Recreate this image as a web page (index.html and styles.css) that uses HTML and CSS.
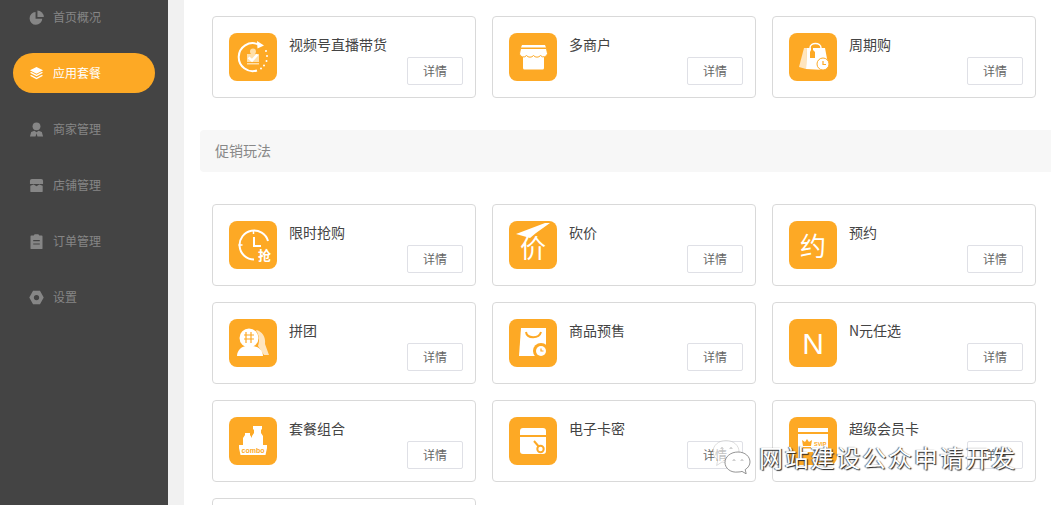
FILE: index.html
```html
<!DOCTYPE html>
<html lang="zh-CN">
<head>
<meta charset="utf-8">
<title>应用套餐</title>
<link rel="stylesheet" href="styles.css">
</head>
<body>
<div class="app">
  <nav class="sidebar">
    <a class="nav-item"><svg class="nav-icon" viewBox="0 0 16 16"><path d="M7 2.200A6.800 6.800 0 1 0 14.200 9.400H7z"/><path d="M9 .6v6.800h6.800A7 7 0 0 0 9 .6z"/></svg><span class="nav-label">首页概况</span></a>
    <a class="nav-item active"><svg class="nav-icon" viewBox="0 0 16 16"><path d="M8 1 15 4.600 8 8.200 1 4.600z"/><path d="M1 7.200 2.600 6.400 8 9.200l5.400-2.800 1.600.8L8 10.800z"/><path d="M1 10.400 2.600 9.600 8 12.400l5.400-2.800 1.600.8L8 14z"/></svg><span class="nav-label">应用套餐</span></a>
    <a class="nav-item"><svg class="nav-icon" viewBox="0 0 16 16"><circle cx="8" cy="4.600" r="4.200"/><path d="M1 15.500l1.300-4.900 3.400-1.400L8 11l2.300-1.800 3.400 1.400 1.300 4.900H9l-1-3.500-1 3.500z"/></svg><span class="nav-label">商家管理</span></a>
    <a class="nav-item"><svg class="nav-icon" viewBox="0 0 16 16"><path d="M3 1h10a2 2 0 0 1 2 2v3.500H1V3a2 2 0 0 1 2-2z"/><path d="M1.400 8.200 5 7l3 1.800L11 7l3.600 1.200v5.800a1 1 0 0 1-1 1H2.400a1 1 0 0 1-1-1z"/></svg><span class="nav-label">店铺管理</span></a>
    <a class="nav-item"><svg class="nav-icon" viewBox="0 0 16 16"><path fill-rule="evenodd" d="M5 1.500 6 .3h4l1 1.200h2.600a.8.8 0 0 1 .8.8v13a.8.8 0 0 1-.8.8H2.400a.8.8 0 0 1-.8-.8v-13a.8.8 0 0 1 .8-.8zM4.500 6.500v1.300h7V6.500zM4.500 10v1.300h7V10z"/></svg><span class="nav-label">订单管理</span></a>
    <a class="nav-item"><svg class="nav-icon" viewBox="0 0 16 16"><path fill-rule="evenodd" d="M4.300.8h7.400L15.700 8l-4 7.200H4.300L.3 8zM8 5.200a2.800 2.800 0 1 0 0 5.600 2.800 2.800 0 0 0 0-5.600z"/></svg><span class="nav-label">设置</span></a>
  </nav>
  <div class="gutter"></div>
  <main class="content">
    <section class="grid">
      <article class="card">
        <svg class="app-icon" viewBox="0 0 48 48"><rect width="48" height="48" rx="8" class="tile"/><circle cx="24" cy="18.500" r="3" class="pale"/><path d="M29 11.200A14 14 0 1 0 28 37.500" class="stroke"/><path d="M28 8l7 4.500-6.500 3z" class="solid"/><path d="M37 18v.1M38 23v.1M37.500 28v.1M35 32.500v.1M32 35.500v.1" class="dots"/><rect x="18" y="21" width="12" height="8" class="pale"/><rect x="18" y="30" width="12" height="1.500" class="pale"/><path d="M19.500 24.500l3.500 3 5.500-6" class="check"/></svg>
        <h3 class="card-title">视频号直播带货</h3>
        <button class="detail">详情</button>
      </article>
      <article class="card">
        <svg class="app-icon" viewBox="0 0 48 48"><rect width="48" height="48" rx="8" class="tile"/><path d="M14 22h21v13a1.500 1.500 0 0 1-1.500 1.500h-18A1.500 1.500 0 0 1 14 35z" class="solid"/><path d="M13 12h23l1 2.500H12z" class="solid"/><path d="M11.500 15.500h26l1 5a4 4 0 0 1-7 2 4.500 4.500 0 0 1-7 0 4.500 4.500 0 0 1-7 0 4 4 0 0 1-7-1.500z" class="solid edge"/></svg>
        <h3 class="card-title">多商户</h3>
        <button class="detail">详情</button>
      </article>
      <article class="card">
        <svg class="app-icon" viewBox="0 0 48 48"><rect width="48" height="48" rx="8" class="tile"/><path d="M15 15h3l-1 21-7-2z" class="pale-solid"/><path d="M18 15h18l3 16-4 6-18-1z" class="solid"/><path d="M21 15c0-6 11-6 11 0" class="stroke thin"/><path d="M22 14h2v3l2 2v6h-5v-6l1-2z" class="tile"/><circle cx="34" cy="31" r="6" class="solid edge"/><path d="M34 28v3.500h3" class="cut thin"/></svg>
        <h3 class="card-title">周期购</h3>
        <button class="detail">详情</button>
      </article>
    </section>

    <h2 class="section-head">促销玩法</h2>

    <section class="grid">
      <article class="card">
        <svg class="app-icon" viewBox="0 0 48 48"><rect width="48" height="48" rx="8" class="tile"/><path d="M25 38.500A14.500 14.500 0 1 1 39 20" class="stroke"/><path d="M24.500 9v4M9.500 24h4" class="stroke thin"/><path d="M25 16v9h7" class="stroke"/><text x="29" y="39" class="tile-glyph small">抢</text></svg>
        <h3 class="card-title">限时抢购</h3>
        <button class="detail">详情</button>
      </article>
      <article class="card">
        <svg class="app-icon" viewBox="0 0 48 48"><rect width="48" height="48" rx="8" class="tile"/><path d="M7 13 36 2l5 0-14 10-6 5z" class="solid"/><text x="11" y="37" class="tile-glyph large">价</text></svg>
        <h3 class="card-title">砍价</h3>
        <button class="detail">详情</button>
      </article>
      <article class="card">
        <svg class="app-icon" viewBox="0 0 48 48"><rect width="48" height="48" rx="8" class="tile"/><text x="11" y="35" class="tile-glyph large">约</text></svg>
        <h3 class="card-title">预约</h3>
        <button class="detail">详情</button>
      </article>
      <article class="card">
        <svg class="app-icon" viewBox="0 0 48 48"><rect width="48" height="48" rx="8" class="tile"/><path d="M27 11c6 1 10 7 9 14l4 11h-5l-6-9c2-6 1-11-2-16z" class="pale-solid"/><circle cx="20" cy="19" r="9.500" class="solid"/><path d="M8 37c0-6 5-10 10-10h5c6 0 11 4 11 10z" class="solid"/><path d="M15 20h10M15 16h10M17 13v11M22 13v11" class="cut thin"/></svg>
        <h3 class="card-title">拼团</h3>
        <button class="detail">详情</button>
      </article>
      <article class="card">
        <svg class="app-icon" viewBox="0 0 48 48"><rect width="48" height="48" rx="8" class="tile"/><path d="M12 9h25v20l-5 8H10z" class="solid"/><path d="M17 13c1 7 13 7 15 0" class="cut"/><circle cx="32" cy="32" r="8" class="tile"/><circle cx="32" cy="32" r="5" class="solid"/><path d="M32 29.500V32h2.500" class="cut thin"/></svg>
        <h3 class="card-title">商品预售</h3>
        <button class="detail">详情</button>
      </article>
      <article class="card">
        <svg class="app-icon" viewBox="0 0 48 48"><rect width="48" height="48" rx="8" class="tile"/><text x="24" y="35" class="big-n">N</text></svg>
        <h3 class="card-title">N元任选</h3>
        <button class="detail">详情</button>
      </article>
      <article class="card">
        <svg class="app-icon" viewBox="0 0 48 48"><rect width="48" height="48" rx="8" class="tile"/><path d="M24 9h9v3l-1 1v3l2 3v9H23V19l2-3v-3l-1-1z" class="solid"/><path d="M16 16h5v2l2 3v7H14v-7l2-3z" class="solid"/><path d="M10 28h28v3l-1.500 7h-25L10 31z" class="solid"/><text x="24" y="36" class="combo">combo</text></svg>
        <h3 class="card-title">套餐组合</h3>
        <button class="detail">详情</button>
      </article>
      <article class="card">
        <svg class="app-icon" viewBox="0 0 48 48"><rect width="48" height="48" rx="8" class="tile"/><path d="M11 14a3 3 0 0 1 3-3h20a3 3 0 0 1 3 3v4H11z" class="solid"/><path d="M11 20h26v14a3 3 0 0 1-3 3H14a3 3 0 0 1-3-3z" class="solid"/><path d="M25 24l6 7" class="cut"/><circle cx="31.500" cy="32" r="3.200" class="edge-tile"/></svg>
        <h3 class="card-title">电子卡密</h3>
        <button class="detail">详情</button>
      </article>
      <article class="card">
        <svg class="app-icon" viewBox="0 0 48 48"><rect width="48" height="48" rx="8" class="tile"/><path d="M9 11h30v4H9z" class="solid"/><path d="M9 17h30v27H9z" class="solid"/><path d="M14 29l-1-6 3 2 2-3 2 3 3-2-1 6zM14 30h8v1.500h-8z" class="tile"/><text x="25" y="29" class="svip">SVIP</text><path d="M14 35h10v9H14z" class="tile"/></svg>
        <h3 class="card-title">超级会员卡</h3>
        <button class="detail">详情</button>
      </article>
      <article class="card"></article>
    </section>
  </main>
</div>
<aside class="watermark">
  <svg class="wm-icon" viewBox="0 0 40 34"><path d="M15 .5C7.500.5 2 5.500 2 11.500c0 3.500 1.800 6.400 4.800 8.400l-1.200 5.600 5.400-3.500c1.300.3 2.600.5 4 .5 7.500 0 13-5 13-11S22.500.5 15 .5z" class="wm-back"/><path d="M10 8.500c.5-1 1.500-1 2 0M19 8.500c.5-1 1.500-1 2 0" class="wm-eye"/><path d="M27 12C19.800 12 14 16.600 14 22.500S19.800 33 27 32c1.500 0 2.800-.2 4-.6l4.200 2.400-1-4.200c3.100-1.900 4.800-4.800 4.800-7.600C39 16.600 34.200 12 27 12z" class="wm-front"/><path d="M22 20.500c.5-1 1.500-1 2 0M30 20.500c.5-1 1.500-1 2 0" class="wm-eye"/></svg>
  <span class="wm-text">网站建设公众申请开发</span>
</aside>
</body>
</html>
```
FILE: styles.css
```css
* { box-sizing: border-box; }
html, body { margin: 0; height: 505px; overflow: hidden; background: #fff; }
body { font-family: "Noto Sans CJK SC", "Liberation Sans", sans-serif; }

.app { display: flex; height: 505px; overflow: hidden; }

.sidebar {
  flex: 0 0 168px;
  background: #444;
  padding-left: 13px;
  padding-right: 13px;
  display: flex;
  flex-direction: column;
  gap: 16px;
}
.nav-item {
  flex: 0 0 40px;
  display: flex;
  align-items: center;
  gap: 9px;
  padding-left: 16px;
  border-radius: 20px;
  color: #868686;
  font-size: 12px;
}
.nav-item:first-child { margin-top: -3px; }
.nav-item.active { background: #fda925; color: #fff; }
.nav-icon { width: 15px; height: 15px; fill: #868686; flex: none; }
.active .nav-icon { fill: #fff; }
.nav-label { padding-bottom: 2px; }

.gutter { flex: 0 0 16px; background: #f1f1f1; }

.content { flex: 1; min-width: 0; padding: 16px 0 0 16px; }

.grid {
  display: grid;
  grid-template-columns: repeat(3, 264px);
  grid-auto-rows: 82px;
  gap: 16px;
  padding-left: 12px;
}
.card {
  position: relative;
  display: flex;
  gap: 12px;
  padding: 16px;
  background: #fff;
  border: 1px solid #d9d9d9;
  border-radius: 4px;
}
.app-icon { width: 48px; height: 48px; flex: none; }
.card-title { margin: 0; font-size: 14px; font-weight: 400; line-height: 22px; color: #444; }
.detail {
  position: absolute;
  right: 12px;
  bottom: 12px;
  width: 56px;
  height: 28px;
  padding: 0 0 2px;
  background: #fff;
  border: 1px solid #dfe0e6;
  border-radius: 2px;
  font: 12px "Noto Sans CJK SC", "Liberation Sans", sans-serif;
  color: #666;
}

.section-head {
  margin: 32px 0;
  height: 42px;
  padding-left: 15px;
  line-height: 40px;
  font-size: 14px;
  font-weight: 400;
  color: #888;
  background: #f7f7f7;
  border-radius: 4px 0 0 4px;
}

.tile { fill: #fda925; }
.solid { fill: #fff; }
.pale { fill: #ffdfa8; }
.pale-solid { fill: #fff; opacity: .7; }
.stroke { fill: none; stroke: #fff; stroke-width: 2; }
.stroke.thin { stroke-width: 1.500; }
.dots { fill: none; stroke: #fff; stroke-width: 2; stroke-linecap: round; }
.check { fill: none; stroke: #fff; stroke-width: 2.500; }
.cut { fill: none; stroke: #fda925; stroke-width: 2; }
.cut.thin { stroke-width: 1.200; }
.edge { stroke: #fda925; stroke-width: 1; }
.edge-tile { fill: #fff; stroke: #fda925; stroke-width: 2; }
.tile-glyph { fill: #fff; font-family: "Noto Sans CJK SC", sans-serif; }
.tile-glyph.small { font-size: 13px; font-weight: 700; }
.tile-glyph.large { font-size: 26px; }
.big-n { fill: #fff; font: 30px "Liberation Sans", sans-serif; text-anchor: middle; }
.combo { fill: #fda925; font: 700 7px "Liberation Sans", sans-serif; text-anchor: middle; }
.svip { fill: #fda925; font: 700 5.500px "Liberation Sans", sans-serif; }

.watermark {
  position: absolute;
  left: 711px;
  top: 440px;
  display: flex;
  align-items: center;
  gap: 8px;
}
.wm-icon { width: 40px; height: 34px; flex: none; }
.wm-back { fill: #fff; fill-opacity: .6; stroke: #bbb; stroke-width: .5; }
.wm-front { fill: #fff; stroke: #666; stroke-width: .7; }
.wm-eye { fill: none; stroke: #777; stroke-width: .8; }
.wm-text {
  font-size: 24px;
  letter-spacing: 1.800px;
  line-height: 34px;
  color: #fff;
  text-shadow: 1px 1px 1px #222, -1px 0 1px #666;
}
```
